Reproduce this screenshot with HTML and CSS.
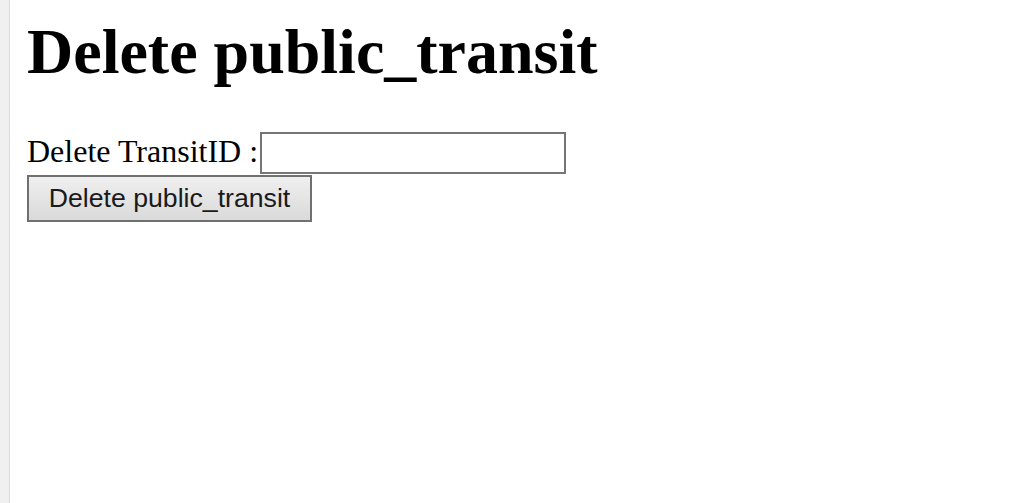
FILE: index.html
```html
<!DOCTYPE html>
<html>
<head>
<meta charset="utf-8">
<title>Delete public_transit</title>
<link rel="stylesheet" href="styles.css">
</head>
<body>
<div class="strip"></div>
<main class="content">
  <h1 class="title">Delete public_transit</h1>
  <form class="form">
    <div class="row">
      <label class="label" for="tid">Delete TransitID :</label><input class="field" id="tid" type="text">
    </div>
    <button class="btn" type="button">Delete public_transit</button>
  </form>
</main>
</body>
</html>
```

FILE: styles.css
```css
html, body {
  margin: 0;
  padding: 0;
  height: 100%;
  background: #ffffff;
}
body {
  display: flex;
  font-family: "Liberation Serif", "Times New Roman", serif;
  color: #000;
}
.strip {
  width: 9px;
  flex: none;
  background: #f0f0f0;
  border-right: 1px solid #dcdcdc;
}
.content {
  padding: 0 17px;
}
.title {
  font-size: 64px;
  font-weight: bold;
  margin: 15px 0 43px;
}
.form {
  margin: 0;
}
.row {
  font-size: 32px;
  line-height: 36px;
}
.label {
  font-size: 32px;
}
.field {
  box-sizing: border-box;
  width: 306px;
  height: 42px;
  border: 2px solid #767676;
  padding: 2px 4px;
  margin: 0 0 0 2px;
  font-family: "Liberation Sans", Arial, sans-serif;
  font-size: 26.67px;
  vertical-align: baseline;
  background: #fff;
}
.btn {
  display: block;
  box-sizing: border-box;
  width: 285px;
  height: 47px;
  margin: 1px 0 0;
  padding: 0 12px;
  border: 2px solid #707070;
  border-radius: 0;
  background: linear-gradient(#efefef, #dadada);
  font-family: "Liberation Sans", Arial, sans-serif;
  font-size: 26.67px;
  color: #1a1a1a;
}
```
